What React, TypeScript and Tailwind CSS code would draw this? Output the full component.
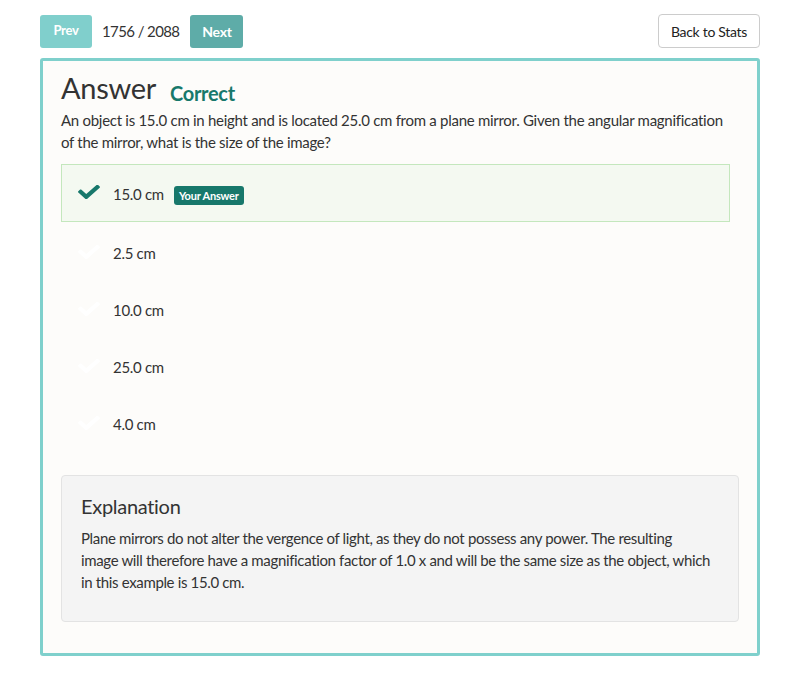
const font = { fontFamily: "Lato, 'Open Sans', sans-serif" }

function CheckIcon({ className }: { className: string }) {
  return (
    <svg viewBox="0 72 512 370" preserveAspectRatio="none" className={className} fill="currentColor">
      <path d="M173.898 439.404l-166.4-166.4c-9.997-9.997-9.997-26.206 0-36.204l36.203-36.204c9.997-9.998 26.207-9.998 36.204 0L192 312.69 432.095 72.596c9.997-9.997 26.207-9.997 36.204 0l36.203 36.204c9.997 9.997 9.997 26.206 0 36.204l-294.4 294.401c-9.998 9.997-26.207 9.997-36.204-.001z" />
    </svg>
  )
}

const choices = ["2.5 cm", "10.0 cm", "25.0 cm", "4.0 cm"]

export default function App() {
  return (
    <div className="min-h-screen bg-white px-10 pt-[14px] text-[#333] tracking-[-0.3px]" style={font}>
      <div className="flex items-center h-[34px] mb-[10px]">
        <button className="flex items-center justify-center w-[52px] h-[33px] rounded-[3px] bg-[#80cfcc] text-white text-[13px] font-bold">Prev</button>
        <span className="ml-[10px] text-[15px] text-[#333] tracking-[-0.6px]">1756 / 2088</span>
        <button className="ml-[11px] flex items-center justify-center w-[53px] h-[33px] rounded-[3px] bg-[#5eaca8] text-white text-[14px] font-bold">Next</button>
        <button className="ml-auto flex items-center justify-center w-[102px] h-[34px] rounded-[4px] border border-[#cccccc] bg-white text-[14px] text-[#222]">Back to Stats</button>
      </div>

      <div className="border-[3px] border-[#7fd0cc] rounded-[3px] bg-[#fdfcfa] px-[18px] pt-[9px] pb-[31px]">
        <div className="flex items-end">
          <h1 className="text-[29px] leading-[36px] text-[#333]">Answer</h1>
          <span className="ml-[14px] mb-[-2px] text-[20px] font-bold text-[#17786b]">Correct</span>
        </div>
        <p className="mt-[3px] text-[15px] leading-[22px] pr-[10px] tracking-[-0.28px]">
          An object is 15.0 cm in height and is located 25.0 cm from a plane mirror. Given the angular magnification of the mirror, what is the size of the image?
        </p>

        <div className="mt-[11px] mr-[9px]">
          <div className="flex items-center h-[58px] border border-[#c4e7bd] bg-[#f4f9f1] pl-[16px]">
            <CheckIcon className="w-[22px] h-[14px] mt-[-3px] text-[#17786b]" />
            <span className="ml-[13px] mt-[3px] text-[15px]">15.0 cm</span>
            <span className="ml-[10px] mt-[5px] rounded-[3px] bg-[#17786b] px-[5px] py-[2px] text-[11px] font-bold text-white leading-[15px] tracking-[-0.2px]">Your Answer</span>
          </div>
          <div className="pt-[3px]">
            {choices.map((c) => (
              <div key={c} className="flex items-center h-[57px] pl-[17px]">
                <CheckIcon className="w-[22px] h-[14px] mt-[-3px] text-white" />
                <span className="ml-[13px] text-[15px]">{c}</span>
              </div>
            ))}
          </div>
        </div>

        <div className="mt-[22px] rounded-[4px] border border-[#e3e3e3] bg-[#f4f4f4] pl-[19px] pr-[26px] pt-[19px] pb-[28px]">
          <h2 className="text-[20px] leading-[22px] text-[#333]">Explanation</h2>
          <p className="mt-[10px] text-[15px] leading-[22px] tracking-[-0.35px]">
            Plane mirrors do not alter the vergence of light, as they do not possess any power. The resulting image will therefore have a magnification factor of 1.0 x and will be the same size as the object, which in this example is 15.0 cm.
          </p>
        </div>
      </div>
    </div>
  )
}
